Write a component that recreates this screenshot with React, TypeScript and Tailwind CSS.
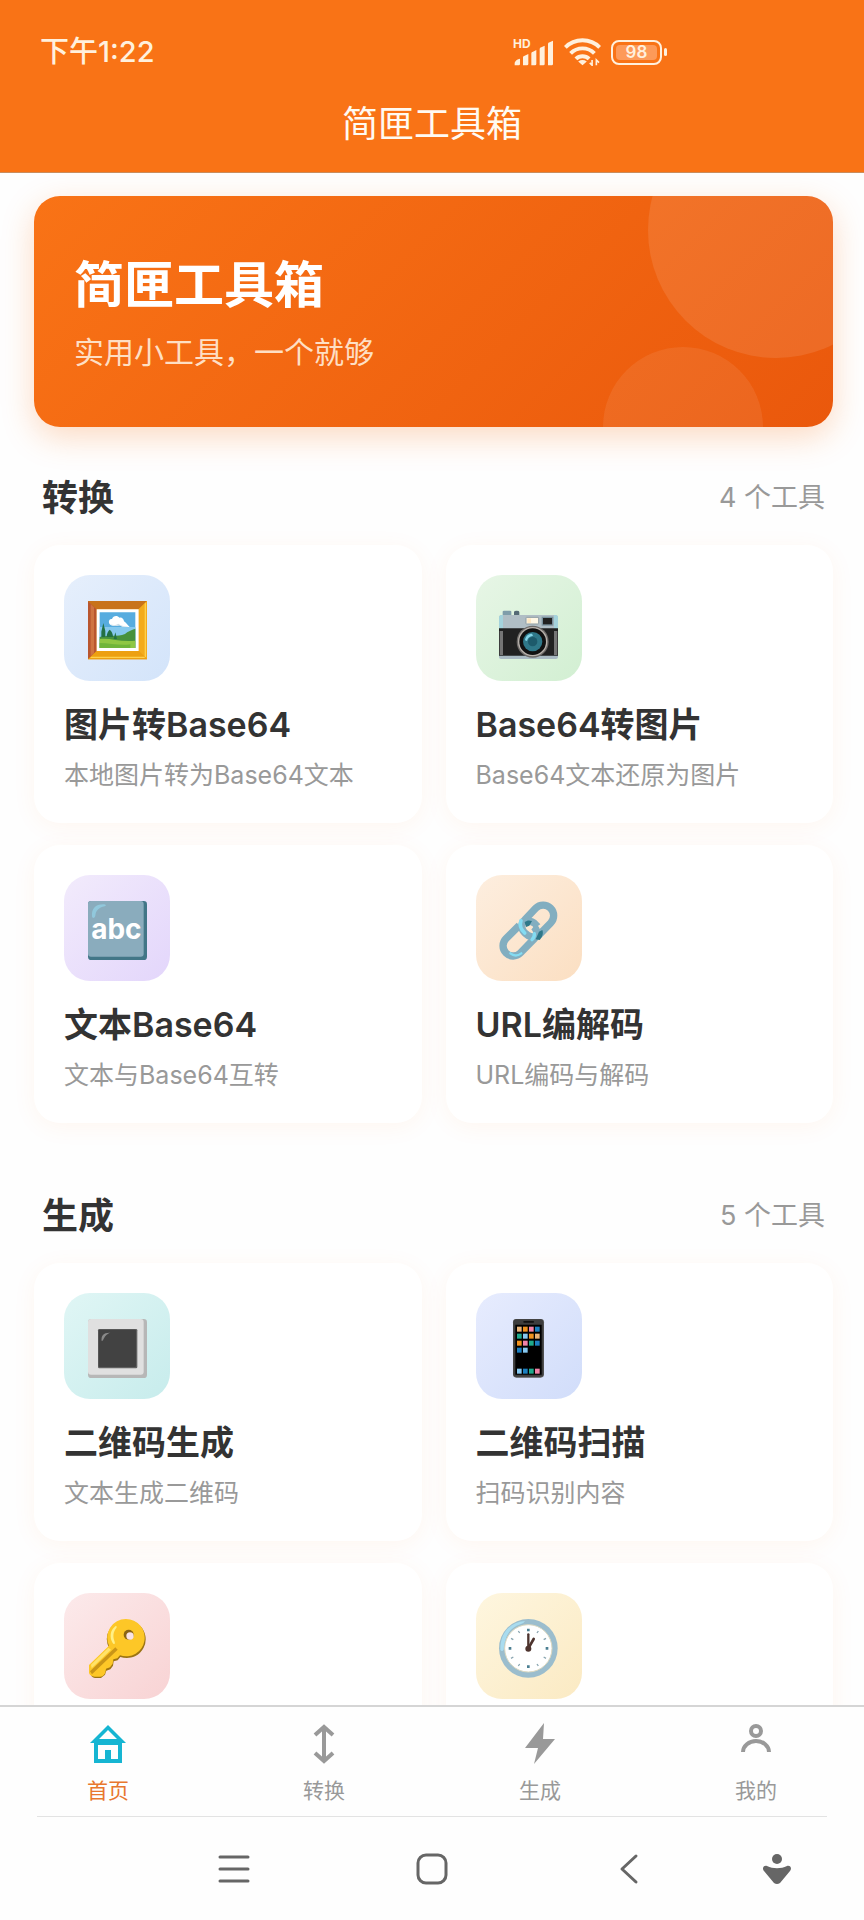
import type { ReactNode } from 'react'

const PictureIcon = () => (
  <svg viewBox="0 0 177 177" className="w-[59px] h-[59px]" aria-hidden="true">
    <path d="M0 0h177v175H0z" fill="#e8940f" />
    <path d="M0 0h177l-26 25H26z" fill="#c8731a" />
    <path d="M0 0l26 25v125L0 175z" fill="#b9562f" />
    <path d="M8 10l10 9v138l-10 9z" fill="#cf7442" />
    <path d="M177 0l-25 25v125l25 25z" fill="#f3ab1b" />
    <path d="M170 8l4-4v166l-4-4z" fill="#ffd04a" />
    <path d="M0 175l26-25h126l25 25z" fill="#eda011" />
    <path d="M10 167h158l4 4H6z" fill="#ffd04a" />
    <path d="M26 25h126v125H26z" fill="#fff" />
    <path d="M35 34h107v107H35z" fill="#57acdf" />
    <path d="M35 78h107v40H35z" fill="#86c9ee" />
    <path d="M63 66c-2-8 3-13 9-12 3-11 17-12 22-4 8-2 13 4 14 11 7 5 11 11 17 17-13 1-23 0-31-5-14 5-29 1-31-7z" fill="#fff" />
    <path d="M68 70c8 4 17 2 23-2 9 7 20 8 31 9-12 2-21 0-28-4-9 3-20 3-26-3z" fill="#cfdfe8" />
    <path d="M35 108c30-7 52 0 76-9 8-8 20-12 31-16v58H35z" fill="#47913c" />
    <path d="M35 114c32-4 62 10 107 5v22H35z" fill="#8fc744" />
    <path d="M35 126c32 0 60 9 92 4v11H35z" fill="#70b53a" />
    <path d="M46 66l6 24v18H40V92zM65 86c6 4 10 12 10 22H56c0-10 4-18 9-22zM82 94l5 20H77z" fill="#237044" />
  </svg>
)

const CameraIcon = () => (
  <svg viewBox="0 0 177 177" className="w-[59px] h-[59px]" aria-hidden="true">
    <path d="M11 32q0-3 4-3h18q4 0 4 3v12H11z" fill="#7f9daa" />
    <path d="M45 44V33q0-4 8-4t8 4v11z" fill="#546a75" />
    <path d="M0 50q0-8 8-8h161q8 0 8 8v34H0z" fill="#b0bec5" />
    <path d="M0 50q0-8 8-8h4v42H0zM165 42h4q8 0 8 8v34h-12z" fill="#a4d3dc" />
    <path d="M0 82h177v84H0z" fill="#212121" />
    <path d="M2 90h10v72H2zM165 90h10v72h-10z" fill="#757575" />
    <path d="M0 164h177v4q0 6-6 6H6q-6 0-6-6z" fill="#a9bac3" />
    <rect x="81" y="49" width="38" height="20" rx="2" fill="#fff8e6" stroke="#8d9ca3" strokeWidth="3" />
    <path d="M85 52h11v14H85z" fill="#ffe9c4" />
    <rect x="130" y="49" width="31" height="23" fill="#212121" stroke="#78909c" strokeWidth="4" />
    <circle cx="101" cy="122" r="48" fill="#6d6a68" />
    <circle cx="101" cy="122" r="44" fill="#b9b3ad" />
    <circle cx="101" cy="122" r="40" fill="#111" />
    <circle cx="101" cy="122" r="29" fill="#2f7889" />
    <circle cx="101" cy="122" r="14" fill="#1d5a6b" />
    <path d="M78 118c1-12 10-20 21-20l3 6c-10 2-16 7-18 16z" fill="#82d4e8" />
  </svg>
)

const AbcIcon = () => (
  <svg viewBox="0 0 177 177" className="w-[59px] h-[59px]" aria-hidden="true">
    <rect width="177" height="177" rx="10" fill="#427687" />
    <rect width="167" height="167" rx="9" fill="#8aacbd" />
    <path d="M12 46c-2-22 10-36 34-36 8 0 10 4 4 6-18 4-26 12-28 28-2 8-9 9-10 2z" fill="#91c8dc" />
    <text x="85" y="113" textAnchor="middle" className="font-['Inter'] text-[84px] font-bold" fill="#fff">abc</text>
  </svg>
)

const LinkIcon = () => (
  <svg viewBox="0 0 177 177" className="w-[59px] h-[59px]" fill="none" aria-hidden="true">
    <path d="M61 73L21 113a30 30 0 0 0 43 43l42-43c11-12 9-27-2-36" stroke="#82aec0" strokeWidth="22" />
    <path d="M110 106c-8 4-22 0-30-8-14-12-16-28-3-41l33-35a31 31 0 0 1 45 44l-37 38" stroke="#82aec0" strokeWidth="22" />
    <path d="M78 66c14-10 28-3 37 10" stroke="#82aec0" strokeWidth="22" />
    <path d="M77 63c7-5 13-6 22-3l-8 14-10 4z" fill="#2f7889" />
    <path d="M120 92l10-5c4 11 0 20-8 30l-12-2z" fill="#2f7889" />
    <path d="M66 59c-5 13-2 25 11 37" stroke="#84dcf2" strokeWidth="11" strokeLinecap="round" />
    <path d="M106 98c1 8-2 13-7 18" stroke="#84dcf2" strokeWidth="10" strokeLinecap="round" />
    <path d="M34 157c10 8 22 8 33 0" stroke="#84dcf2" strokeWidth="7" strokeLinecap="round" />
  </svg>
)

const SquareButtonIcon = () => (
  <svg viewBox="0 0 177 177" className="w-[59px] h-[59px]" aria-hidden="true">
    <rect width="177" height="177" rx="10" fill="#b7b7b7" />
    <rect width="167" height="167" rx="9" fill="#e0e0e0" />
    <rect x="30" y="30" width="118" height="118" rx="4" fill="#616161" />
    <rect x="32" y="32" width="112" height="112" rx="3" fill="#424242" />
    <path d="M41 66c-2-17 6-26 26-25-8 3-12 5-18 15-3 4-4 10-8 10z" fill="#8a8a8a" />
  </svg>
)

const phoneApps = [
  ['#e8b47a', '#f0921e', '#f283a8', '#1c7fc0'],
  ['#1faa8c', '#86c8f0', '#f0921e', '#e8b47a'],
  ['#f0921e', '#f283a8', '#1faa8c', '#1c7fc0'],
  ['#1c7fc0', '#86c8f0'],
  [],
  [],
  ['#86c8f0', '#1c7fc0', '#1faa8c', '#f283a8'],
]

const PhoneIcon = () => (
  <svg viewBox="0 0 177 177" className="w-[59px] h-[59px]" aria-hidden="true">
    <rect x="42" y="0" width="93" height="176" rx="10" fill="#5a5a5a" />
    <rect x="43" y="1" width="90" height="172" rx="9" fill="#3d3d3d" />
    <path d="M49 17h79v150H49z" fill="#000" />
    <rect x="73" y="6" width="32" height="5" rx="2" fill="#111" />
    {phoneApps.map((row, y) =>
      row.map((color, x) => (
        <rect key={`${x}-${y}`} x={54 + x * 18} y={23 + y * 21} width="14" height="15" fill={color} />
      ))
    )}
  </svg>
)

const KeyIcon = () => (
  <svg viewBox="0 0 177 177" className="w-[59px] h-[59px]" aria-hidden="true">
    <path
      d="M121 4a57 57 0 0 1 20 108c-14 6-30 6-44 2l-8 10-12 3-2 13-8 11-12 4-4 12-12 10H21q-12-2-14-14v-16l57-59A57 57 0 0 1 121 4z"
      fill="#9c7414"
    />
    <path
      d="M114 0a56 56 0 1 1-18 109l-8 9-12 3-2 13-8 11-12 4-2 12q-6 12-16 12H20Q6 172 3 162v-24l60-58A56 56 0 0 1 114 0z"
      fill="#fdc727"
    />
    <path d="M6 157l76-72 7 7-77 74z" fill="#c99518" />
    <path d="M9 137l52-51 8 6-58 56z" fill="#ffe36a" />
    <path d="M82 22c-16 12-18 34-8 50 4 6 8 2 6-4-6-16-5-28 5-41 3-4 0-7-3-5z" fill="#fff086" />
    <circle cx="122" cy="47" r="15" fill="#8a6414" />
    <circle cx="126" cy="51" r="11" fill="#fae3e4" />
  </svg>
)

const ClockIcon = () => (
  <svg viewBox="0 0 177 177" className="w-[59px] h-[59px]" aria-hidden="true">
    <circle cx="88" cy="88" r="88" fill="#9bbdcd" />
    <circle cx="88" cy="88" r="71" fill="#fff" stroke="#dcd8c0" strokeWidth="3" />
    <path d="M4 92C4 42 32 10 78 6q-4 8-14 10C34 26 18 48 14 92q-5 8-10 0z" fill="#a9dcef" />
    <path d="M84 29h8v8h-8zM84 139h8v8h-8zM29 84h8v8h-8zM140 84h8v8h-8z" fill="#4b7f92" />
    <path
      d="M58 36l4 6M118 36l-4 6M36 58l7 4M141 58l-7 4M36 118l7-4M141 118l-7-4M58 141l4-6M118 141l-4-6"
      stroke="#8aa5b0"
      strokeWidth="4"
    />
    <path d="M88 88V46" stroke="#4e342e" strokeWidth="7" strokeLinecap="round" />
    <path d="M88 88l16-28" stroke="#4e342e" strokeWidth="8" strokeLinecap="round" />
    <circle cx="88" cy="89" r="9" fill="#4e342e" />
  </svg>
)

const HomeIcon = () => (
  <svg viewBox="0 0 40 42" className="w-10 h-[42px]" aria-hidden="true">
    <path fillRule="evenodd" d="M20 2L2 20h4v20h28V20h4zM20 7l9 9H11zM10 22h20v14h-7v-9h-6v9h-7z" fill="#16b5d2" />
  </svg>
)

const ConvertIcon = () => (
  <svg viewBox="0 0 40 42" className="w-10 h-[42px]" fill="none" stroke="#999" strokeWidth="4" aria-hidden="true">
    <path d="M20 4v34M11 12l9-8 9 8M11 30l9 8 9-8" />
  </svg>
)

const BoltIcon = () => (
  <svg viewBox="0 0 40 42" className="w-10 h-[42px]" aria-hidden="true">
    <path d="M24 0L5 25h13l-4 16 21-25H23z" fill="#999" />
  </svg>
)

const MineIcon = () => (
  <svg viewBox="0 0 40 42" className="w-10 h-[42px]" fill="none" stroke="#999" strokeWidth="4" aria-hidden="true">
    <circle cx="20" cy="8" r="5" />
    <path d="M7 29c0-6 6-11 13-11s13 5 13 11" />
  </svg>
)

type Tool = {
  icon: ReactNode
  tile: string
  label: string
  title?: string
  desc?: string
}

type Section = {
  name: string
  count: number
  tools: Tool[]
}

const sections: Section[] = [
  {
    name: '转换',
    count: 4,
    tools: [
      { icon: <PictureIcon />, tile: 'from-[#e6effc] to-[#d3e4fa]', label: '图片转Base64', title: '图片转Base64', desc: '本地图片转为Base64文本' },
      { icon: <CameraIcon />, tile: 'from-[#e7f6e6] to-[#d2efd2]', label: 'Base64转图片', title: 'Base64转图片', desc: 'Base64文本还原为图片' },
      { icon: <AbcIcon />, tile: 'from-[#f2ebfc] to-[#e3d6fb]', label: '文本Base64', title: '文本Base64', desc: '文本与Base64互转' },
      { icon: <LinkIcon />, tile: 'from-[#fdeedf] to-[#fbdfc2]', label: 'URL编解码', title: 'URL编解码', desc: 'URL编码与解码' },
    ],
  },
  {
    name: '生成',
    count: 5,
    tools: [
      { icon: <SquareButtonIcon />, tile: 'from-[#e0f6f5] to-[#c7ecec]', label: '二维码生成', title: '二维码生成', desc: '文本生成二维码' },
      { icon: <PhoneIcon />, tile: 'from-[#e7ecfe] to-[#d1ddfa]', label: '二维码扫描', title: '二维码扫描', desc: '扫码识别内容' },
      { icon: <KeyIcon />, tile: 'from-[#fceaeb] to-[#f8d3d4]', label: '生成' },
      { icon: <ClockIcon />, tile: 'from-[#fef6df] to-[#fbeac3]', label: '生成' },
    ],
  },
]

const tabs = [
  { name: '首页', icon: <HomeIcon />, active: true },
  { name: '转换', icon: <ConvertIcon /> },
  { name: '生成', icon: <BoltIcon /> },
  { name: '我的', icon: <MineIcon /> },
]

const StatusBar = () => (
  <div className="h-[104px] flex items-center justify-between pl-10 pr-[197px] text-[#fff0dd]">
    <span className="text-[29px] font-medium">下午1:22</span>
    <div className="flex items-center gap-[10px]">
      <svg viewBox="0 -12 123 105" className="w-[41px] h-[35px]" fill="currentColor" aria-hidden="true">
        <text x="0" y="28" className="text-[36px] font-bold">HD</text>
        <path d="M5 79V71q4-11 16-12v16q0 4-4 4zM30 55q0-4 5-5l11-5v30q0 4-4 4H30zM55 43q0-4 5-5l10-5v42q0 4-4 4H55zM80 30q0-4 5-5l10-5v55q0 4-4 4H80zM105 15q0-4 5-5l10-5v70q0 4-4 4h-11z" />
      </svg>
      <svg viewBox="0 0 112 84" className="w-[37px] h-[28px]" fill="none" stroke="currentColor" strokeWidth="12" aria-hidden="true">
        <path d="M4 28C32-1 80-1 108 28M20 46c20-20 52-20 72 0M36 63c11-11 29-11 40 0" />
        <path d="M56 82L43 71q13-9 26 0z" fill="currentColor" stroke="none" />
        <path d="M85 66v16l-7-7M98 82V66l8 8" strokeWidth="5" />
      </svg>
      <div className="flex items-center gap-[2px]">
        <span className="flex w-[51px] h-[25px] rounded-lg border-2 border-current p-[3px]">
          <span className="flex-1 flex items-center justify-center rounded-sm bg-[#fd9a59] text-[17px] leading-4 font-semibold">98</span>
        </span>
        <span className="w-[3px] h-2 rounded-sm bg-current" />
      </div>
    </div>
  </div>
)

const ToolCard = ({ tool }: { tool: Tool }) => (
  <button
    type="button"
    aria-label={tool.label}
    className="min-h-[278px] flex flex-col items-start p-[30px] text-left rounded-[26px] bg-white shadow-[0_4px_24px_rgba(249,115,22,0.06)]"
  >
    <span className={`w-[106px] h-[106px] pt-1 flex items-center justify-center rounded-[26px] bg-linear-135 ${tool.tile}`}>
      {tool.icon}
    </span>
    {tool.title && <span className="mt-5 text-[34px] leading-[48px] font-semibold text-[#333]">{tool.title}</span>}
    {tool.desc && <span className="mt-2 text-[25px] leading-9 text-[#999]">{tool.desc}</span>}
  </button>
)

const App = () => {
  return (
    <div className="h-screen flex flex-col bg-[#fefefe] font-['Inter','Noto_Sans_CJK_SC',sans-serif]">
      <header className="shrink-0 bg-[#f97316] border-b border-[#c98d5e]">
        <StatusBar />
        <h1 className="pb-7 text-center text-[36px] leading-10 text-[#fffaf2]">简匣工具箱</h1>
      </header>

      <main className="flex-1 min-h-0 overflow-hidden pl-[34px] pr-[31px] pt-[23px]">
        <div className="rounded-[26px] shadow-[0_10px_32px_rgba(249,115,22,0.26)]">
          <div className="relative overflow-hidden rounded-[26px] bg-linear-135 from-[#f97316] to-[#ea580c] px-10 pt-[59px] pb-[55px]">
            <span className="absolute -top-[94px] -right-[71px] w-64 h-64 rounded-full bg-white/10" />
            <span className="absolute -bottom-20 right-[70px] w-40 h-40 rounded-full bg-white/8" />
            <h2 className="text-[50px] leading-[60px] font-bold text-white">简匣工具箱</h2>
            <p className="mt-[17px] text-[30px] leading-10 text-[#fedfc4]">实用小工具，一个就够</p>
          </div>
        </div>

        {sections.map((section) => (
          <section key={section.name} className="mt-[47px] pb-[22px]">
            <div className="flex items-center justify-between px-2">
              <h2 className="text-[36px] leading-[48px] font-bold text-[#333]">{section.name}</h2>
              <span className="text-[27px] text-[#999]">{section.count} 个工具</span>
            </div>
            <div className="mt-[23px] grid grid-cols-2 gap-x-6 gap-y-[22px]">
              {section.tools.map((tool, index) => (
                <ToolCard key={index} tool={tool} />
              ))}
            </div>
          </section>
        ))}
      </main>

      <footer className="shrink-0 bg-[#fefefe]">
        <nav className="grid grid-cols-4 border-t-2 border-[#d5d5d5] pt-4 pb-[9px]">
          {tabs.map((tab) => (
            <a key={tab.name} href="#" className="flex flex-col items-center">
              {tab.icon}
              <span className={`mt-[10px] text-[21px] leading-8 ${tab.active ? 'text-[#e8772e]' : 'text-[#999]'}`}>{tab.name}</span>
            </a>
          ))}
        </nav>
        <div className="mx-[37px] border-t border-[#e3e3e3]" />
        <div className="h-[103px] grid grid-cols-[135fr_198fr_198fr_198fr_96fr_39fr] items-center justify-items-center">
          <button type="button" aria-label="菜单" className="col-start-2">
            <svg viewBox="0 0 32 32" className="w-8 h-8" fill="none" stroke="#666" strokeWidth="3" strokeLinecap="round">
              <path d="M2 4h28M2 16h28M2 28h28" />
            </svg>
          </button>
          <button type="button" aria-label="主屏幕">
            <svg viewBox="0 0 32 32" className="w-8 h-8" fill="none" stroke="#666" strokeWidth="3">
              <rect x="2" y="2" width="28" height="28" rx="8" />
            </svg>
          </button>
          <button type="button" aria-label="返回">
            <svg viewBox="0 0 32 32" className="w-8 h-8" fill="none" stroke="#666" strokeWidth="3" strokeLinecap="round" strokeLinejoin="round">
              <path d="M22 3L8 16l14 13" />
            </svg>
          </button>
          <button type="button" aria-label="助手">
            <svg viewBox="0 0 32 32" className="w-8 h-8" fill="#666">
              <circle cx="16" cy="6" r="5" />
              <path d="M6 13c6 3 14 3 20 0 4-1 5 3 3 5L19 30q-3 2-6 0L3 18c-2-2-1-6 3-5z" />
            </svg>
          </button>
        </div>
      </footer>
    </div>
  )
}

export default App
